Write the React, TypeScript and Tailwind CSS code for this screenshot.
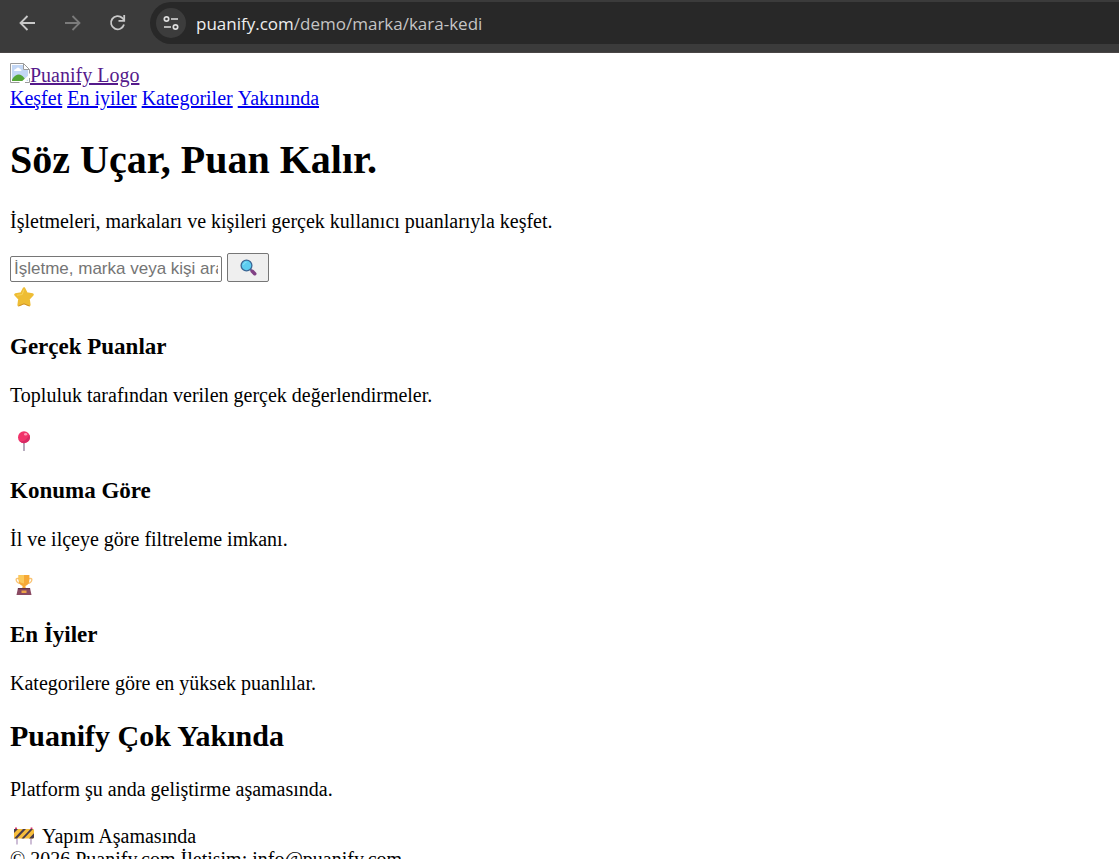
import type { ReactNode } from 'react'

const navLinks = ['Keşfet', 'En iyiler', 'Kategoriler', 'Yakınında']

function EmojiIcon({ children }: { children: ReactNode }) {
  return (
    <svg viewBox="0 0 20 20" className="mx-1 block h-5 w-5 shrink-0" aria-hidden="true">
      {children}
    </svg>
  )
}

function StarIcon() {
  return (
    <EmojiIcon>
      <path
        d="M10 1.500 12.600 6.600 18.500 7.600 14.500 12 15.300 18 10 15.800 4.700 18 5.500 12 1.500 7.600 7.400 6.600Z"
        fill="#eebd35"
        stroke="#eebd35"
        strokeWidth="2.600"
        strokeLinejoin="round"
      />
      <path d="M4.500 19 10 16.800 15.500 19" fill="none" stroke="#cf9128" strokeWidth="1" />
      <path d="M10 2.500 8.200 7.600 3 8.200" fill="none" stroke="#f7d55a" strokeWidth="1" />
    </EmojiIcon>
  )
}

function PinIcon() {
  return (
    <EmojiIcon>
      <path d="M9.200 11h1.600v8.400a.8.8 0 0 1-1.600 0Z" fill="#a295ac" />
      <circle cx="10" cy="6.200" r="6" fill="#f0336a" />
      <path d="M15.400 3.800a6 6 0 0 1-10.200 6q5.600 2.400 10.200-6Z" fill="#d62a65" />
      <ellipse cx="11.600" cy="3.300" rx="1.600" ry="1.200" fill="#ff9bb8" />
    </EmojiIcon>
  )
}

function TrophyIcon() {
  return (
    <EmojiIcon>
      <path
        d="M5.500 3.500H3.200Q2 3.500 2.200 5q.4 3 4.300 3.500M14.500 3.500h2.300q1.200 0 1 1.500-.4 3-4.300 3.500"
        fill="none"
        stroke="#f9c476"
        strokeWidth="1.400"
      />
      <path d="M4.600 0h10.800v5q0 4.600-4 6l.5 3H8.100l.5-3q-4-1.400-4-6Z" fill="#f6a936" />
      <path d="M4.600 0h5.400v8.500q-5-.5-5.400-4Z" fill="#fbc95a" />
      <path d="M4 13h12l1.500 7h-15Z" fill="#8a4a62" />
      <path d="M4 13h12l.2 1.200H3.800Z" fill="#653448" />
      <path d="M7.500 15.500h5V18h-5Z" fill="#eda348" />
    </EmojiIcon>
  )
}

function BarrierIcon() {
  return (
    <EmojiIcon>
      <path d="M3 10v7.500M17 10v7.500" stroke="#b9a3c6" strokeWidth="1.400" />
      <path d="M2 2V.500M17.500 2V.500" stroke="#d8336d" strokeWidth="1.800" />
      <rect x="0" y="2" width="20" height="9.500" rx="1" fill="#f7bd3b" />
      <path
        d="M0 6V2h4Zm0 5.500L9 2h3L3 11.500ZM7.500 11.500 16.500 2H19l-9 9.500ZM15 11.500l5-5.300v4.300l-1 1Z"
        fill="#493b4b"
      />
    </EmojiIcon>
  )
}

function SearchIcon() {
  return (
    <svg viewBox="0 0 17 17" className="h-[17px] w-[17px]" aria-hidden="true">
      <path d="m10 10 2 2" stroke="#6a6290" strokeWidth="2" />
      <path d="m12.300 12.300 2.400 2.400" stroke="#814084" strokeWidth="3.600" strokeLinecap="round" />
      <circle cx="6.500" cy="6.500" r="5.400" fill="#5dcdf0" stroke="#3c6896" strokeWidth="1.300" />
      <path d="M3.500 6a3 3 0 0 1 3-2.700" fill="none" stroke="#8be4fa" strokeWidth="1" />
    </svg>
  )
}

function BrokenImageIcon() {
  return (
    <svg viewBox="0 0 20 20" className="h-5 w-5 shrink-0" aria-hidden="true">
      <path d="M.500.500h13l6 6v13H.500Z" fill="#fff" />
      <path d="M2 2h11v5h5v11H2Z" fill="#c3d7f5" />
      <path d="M4 8q0-2 2-2 .5-1.500 2-1.500T10 6q1.500 0 1.500 2Z" fill="#fff" />
      <path d="M2 18v-1.500Q5 11.500 9 11.500q4 0 7 6.500Z" fill="#54a637" />
      <path d="M13.500.500v6h6" fill="#fff" stroke="#9a9a9a" />
      <path d="M19.500 6.500v4M13.500.500H.500v19h9M13.500.500l6 6" fill="none" stroke="#9a9a9a" />
      <path d="m10 20 10-9v3.500L14 20Z" fill="#fff" />
      <path d="M15 19.500h4.500V15" fill="none" stroke="#9a9a9a" />
    </svg>
  )
}

function BrowserBar() {
  return (
    <header className="flex h-[53px] shrink-0 items-start border-b border-[#494545] bg-[#3b3b3b] pt-[2px] pl-[17px]">
      <div className="flex h-[42px] items-center gap-[25px]">
        <button type="button" aria-label="Geri" className="text-[#c9c9c9]">
          <svg viewBox="0 0 20 20" className="h-5 w-5" fill="none" stroke="currentColor" strokeWidth="1.800">
            <path d="M18 10H4M10.500 3 3.500 10l7 7" />
          </svg>
        </button>
        <button type="button" aria-label="İleri" className="text-[#7b7b7b]">
          <svg viewBox="0 0 20 20" className="h-5 w-5" fill="none" stroke="currentColor" strokeWidth="1.800">
            <path d="M3 10h14M10.500 3l7 7-7 7" />
          </svg>
        </button>
        <button type="button" aria-label="Yenile" className="text-[#c9c9c9]">
          <svg viewBox="0 0 20 20" className="h-5 w-5" fill="none" stroke="currentColor" strokeWidth="1.800">
            <path d="M17 11.500A6.600 6.600 0 1 1 15.300 5l1.700 2" />
            <path d="M17.200 2v5.800h-5.700" />
          </svg>
        </button>
      </div>
      <div className="ml-[23px] flex h-[42px] flex-1 items-center gap-[10px] rounded-l-full bg-[#282828] pl-[6px]">
        <button
          type="button"
          aria-label="Site bilgileri"
          className="flex h-[30px] w-[30px] shrink-0 items-center justify-center rounded-full bg-[#3c3c3c] text-[#dedede]"
        >
          <svg viewBox="0 0 16 16" className="h-4 w-4" fill="none" stroke="currentColor" strokeWidth="1.700">
            <circle cx="3.500" cy="4" r="2.200" />
            <path d="M8 4h7M1 12h7" />
            <circle cx="12.500" cy="12" r="2.200" />
          </svg>
        </button>
        <p className="pt-0.5 font-['Open_Sans',sans-serif] text-[17px] leading-6 whitespace-nowrap text-[#c5c5c5]">
          <span className="text-[#eeeeee]">puanify.com</span>/demo/marka/kara-kedi
        </p>
      </div>
    </header>
  )
}

function Feature({ icon, title, text }: { icon: ReactNode; title: string; text: string }) {
  return (
    <section>
      <div className="flex h-[27px] items-center">{icon}</div>
      <h3 className="mt-[23px] text-[23px] leading-[27px] font-bold">{title}</h3>
      <p className="mt-6 mb-5 leading-[23px]">{text}</p>
    </section>
  )
}

function App() {
  return (
    <div className="flex h-screen flex-col overflow-hidden bg-white">
      <BrowserBar />
      <div className="min-h-0 flex-1 overflow-hidden px-[10px] pt-[10px] font-['Liberation_Serif',serif] text-[20px] leading-[23px] text-black">
        <a href="#" className="flex h-6 w-fit items-start leading-6 text-[#551a8b] underline">
          <BrokenImageIcon />
          Puanify Logo
        </a>
        <nav className="flex gap-[5px]">
          {navLinks.map((link) => (
            <a key={link} href="#" className="text-[#0000ee] underline">
              {link}
            </a>
          ))}
        </nav>

        <main>
          <h1 className="mt-[27px] text-[40px] leading-[46px] font-bold">Söz Uçar, Puan Kalır.</h1>
          <p className="mt-[27px] leading-[23px]">
            İşletmeleri, markaları ve kişileri gerçek kullanıcı puanlarıyla keşfet.
          </p>
          <form className="mt-5 mb-px flex items-end gap-[5px]" onSubmit={(e) => e.preventDefault()}>
            <input
              type="text"
              aria-label="Ara"
              placeholder="İşletme, marka veya kişi ara..."
              className="h-[26px] w-[212px] rounded-[2px] border border-[#767676] px-[3px] font-['Liberation_Sans',sans-serif] text-[17px] placeholder:text-[#757575]"
            />
            <button
              type="submit"
              aria-label="Ara"
              className="flex h-[29px] w-[42px] items-center justify-center rounded-[2px] border border-[#767676] bg-[#efefef]"
            >
              <SearchIcon />
            </button>
          </form>

          <Feature
            icon={<StarIcon />}
            title="Gerçek Puanlar"
            text="Topluluk tarafından verilen gerçek değerlendirmeler."
          />
          <Feature icon={<PinIcon />} title="Konuma Göre" text="İl ve ilçeye göre filtreleme imkanı." />
          <Feature icon={<TrophyIcon />} title="En İyiler" text="Kategorilere göre en yüksek puanlılar." />

          <section>
            <h2 className="mt-6 text-[30px] leading-[34px] font-bold">Puanify Çok Yakında</h2>
            <p className="mt-[25px] leading-[23px]">Platform şu anda geliştirme aşamasında.</p>
            <div className="mt-6 flex h-[23px] items-center gap-1">
              <BarrierIcon />
              Yapım Aşamasında
            </div>
          </section>
        </main>

        <footer>© 2026 Puanify.com İletişim: info@puanify.com</footer>
      </div>
    </div>
  )
}

export default App
